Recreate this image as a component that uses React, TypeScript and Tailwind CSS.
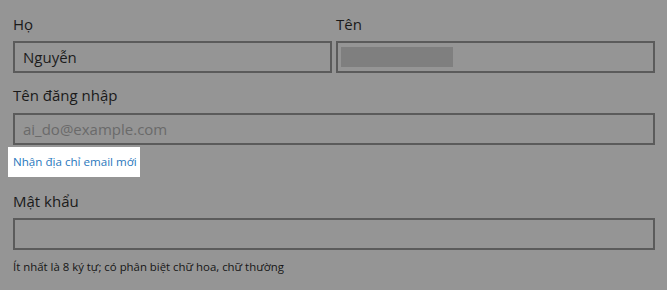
const labelCls = "block h-[20px] text-[15px] leading-[20px] text-[#1a1a1a]";
const boxCls = "flex h-[32px] items-center border-2 border-[#5b5b5b] px-[8px] text-[15px]";

export default function App() {
  return (
    <div
      className="h-[290px] w-[667px] overflow-hidden bg-[#959595] pl-[13px] pr-[12px] pt-[14px]"
      style={{ fontFamily: '"Open Sans", "Noto Sans", sans-serif' }}
    >
      <div className="grid grid-cols-2 gap-[4px]">
        <div>
          <label className={labelCls}>Họ</label>
          <div className={`${boxCls} mt-[7px] text-[#1c1c1c]`}>Nguyễn</div>
        </div>
        <div>
          <label className={labelCls}>Tên</label>
          <div className={`${boxCls} mt-[7px] pl-[3px]`}>
            <div className="h-[20px] w-[112px] bg-[#7f7f7f]" />
          </div>
        </div>
      </div>

      <label className={`${labelCls} mt-[12px]`}>Tên đăng nhập</label>
      <div className={`${boxCls} mt-[8px] text-[#6a6a6a]`}>ai_do@example.com</div>

      <div className="-ml-[5px] mt-[2px] flex h-[30px] w-[132px] items-center whitespace-nowrap bg-white pl-[5px] text-[11.6px] text-[#2a78bd]">
        <a href="#">Nhận địa chỉ email mới</a>
      </div>

      <label className={`${labelCls} mt-[14px]`}>Mật khẩu</label>
      <div className={`${boxCls} mt-[7px]`} />

      <p className="mt-[9px] whitespace-nowrap text-[11.4px] font-medium leading-[16px] text-[#151515]">
        Ít nhất là 8 ký tự; có phân biệt chữ hoa, chữ thường
      </p>
    </div>
  );
}
